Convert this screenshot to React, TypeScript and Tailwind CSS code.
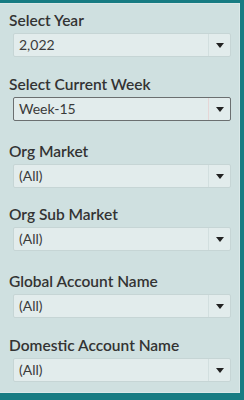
const filters = [
  { label: "Select Year", value: "2,022", mt: "", active: false },
  { label: "Select Current Week", value: "Week-15", mt: "mt-[18px]", active: true },
  { label: "Org Market", value: "(All)", mt: "mt-[21px]", active: false },
  { label: "Org Sub Market", value: "(All)", mt: "mt-[17px]", active: false },
  { label: "Global Account Name", value: "(All)", mt: "mt-[21px]", active: false },
  { label: "Domestic Account Name", value: "(All)", mt: "mt-[18px]", active: false },
];

function Caret() {
  return (
    <svg width="8" height="5" viewBox="0 0 8 5" className="block">
      <path d="M0 0 L8 0 L4 5 Z" fill="#222" />
    </svg>
  );
}

export default function App() {
  return (
    <div
      className="w-[244px] h-[400px] bg-[#177c83] pt-[3px] pr-[4px] pb-[7px] overflow-hidden"
      style={{ fontFamily: "Lato, 'Open Sans', sans-serif" }}
    >
      <div className="h-full bg-[#cfe0e0] border border-l-0 border-[#dbe8e8] pl-[9px] pr-[8px] pt-[7px]">
        {filters.map((f, i) => (
          <div key={i} className={f.mt}>
            <div className="text-[15.5px] leading-[18px] font-semibold text-[#333]">
              {f.label}
            </div>
            <div
              className={`mt-[4px] ml-[4px] h-[24px] flex items-center rounded-[2px] bg-[#e2ecec] ${
                f.active ? "border border-[#6b6f70]" : "border border-[#c6d5d5]"
              }`}
            >
              <div className="flex-1 pl-[5px] text-[14px] text-[#3a3a3a] leading-none">{f.value}</div>
              <div
                className={`h-full w-[22px] flex items-center justify-center border-l ${
                  f.active ? "border-[#e6d6d6]" : "border-[#d2dfdf]"
                }`}
              >
                <Caret />
              </div>
            </div>
          </div>
        ))}
      </div>
    </div>
  );
}
